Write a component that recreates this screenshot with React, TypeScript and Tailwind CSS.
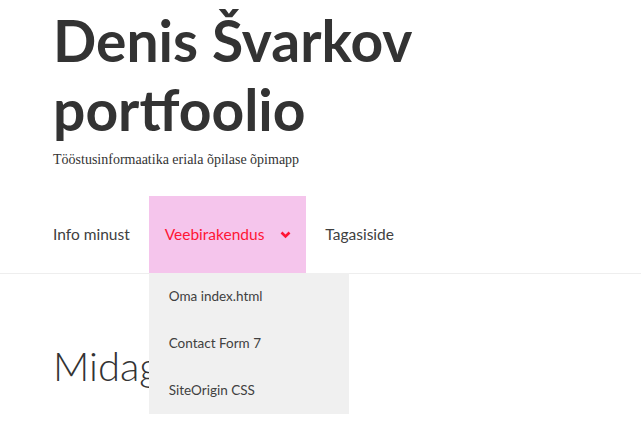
import React from "react";

export default function App() {
  const sans = { fontFamily: "Lato, 'Open Sans', sans-serif" };
  return (
    <div className="w-[641px] h-[421px] bg-white overflow-hidden relative" style={sans}>
      <div className="pl-[53px] pt-[6px]">
        <h1 className="text-[57px] leading-[69px] font-bold text-[#333333] tracking-[0px]">
          Denis Švarkov
          <br />
          portfoolio
        </h1>
        <p className="mt-[7px] text-[14px] leading-[18px] text-[#333333]" style={{ fontFamily: "'Liberation Serif', serif" }}>
          Tööstusinformaatika eriala õpilase õpimapp
        </p>
      </div>
      <nav className="mt-[27px] border-b border-[#eeeeee] h-[78px]">
        <ul className="flex pl-[53px] h-[77px] items-stretch text-[15.5px]">
          <li className="flex items-center pr-[19px] text-[#404040]">Info minust</li>
          <li className="relative flex items-center bg-[#f5c5ec] pl-[16px] pr-[15px] text-[#ff1535]">
            <span>Veebirakendus</span>
            <svg className="ml-[16px]" width="11" height="8" viewBox="0 0 11 8">
              <path d="M1.5 1.5 L5.5 5.5 L9.5 1.5" fill="none" stroke="#ff1535" strokeWidth="2.6" />
            </svg>
            <div className="absolute left-0 top-[77px] w-[200px] bg-[#f0f0f0] z-10 text-[13.5px] text-[#404040]">
              <div className="h-[47px] flex items-center pl-[20px]">Oma index.html</div>
              <div className="h-[47px] flex items-center pl-[20px]">Contact Form 7</div>
              <div className="h-[47px] flex items-center pl-[20px]">SiteOrigin CSS</div>
            </div>
          </li>
          <li className="flex items-center pl-[19px] text-[#404040]">Tagasiside</li>
        </ul>
      </nav>
      <div className="pl-[53px] pt-[68px]">
        <h2 className="text-[40px] leading-[48px] font-light text-[#333333]">Midagi minust</h2>
      </div>
    </div>
  );
}
